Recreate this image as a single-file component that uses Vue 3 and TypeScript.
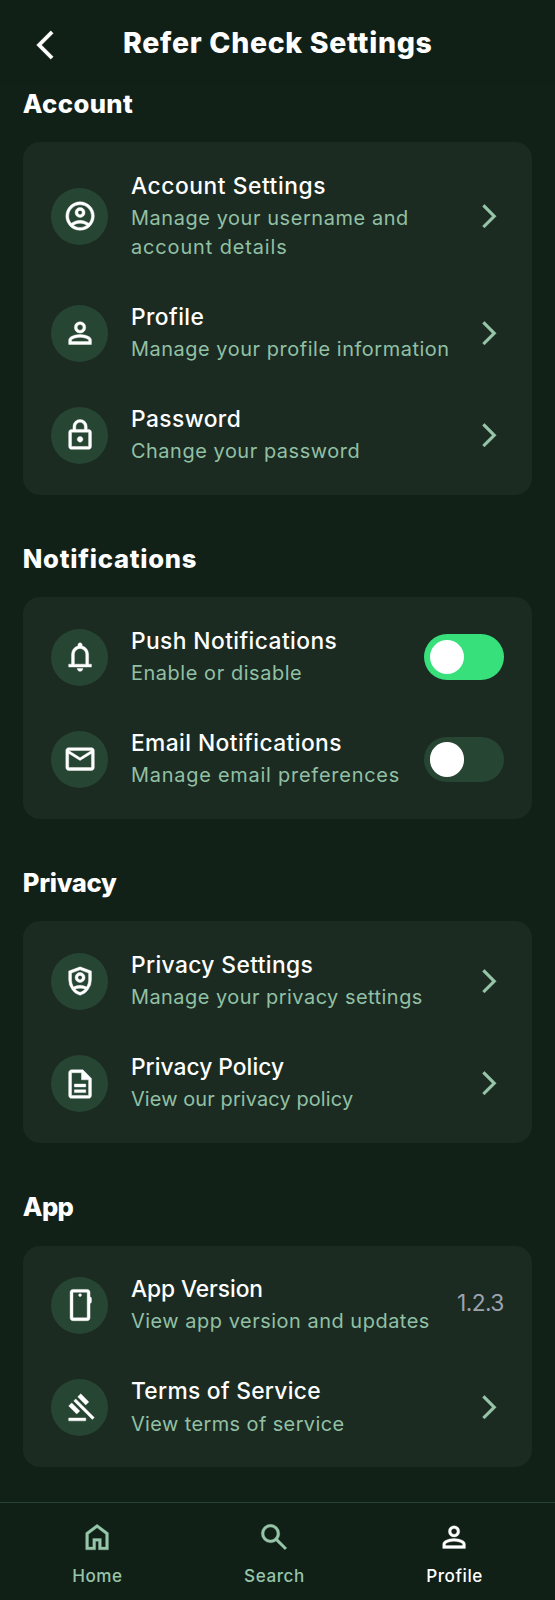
<script setup lang="ts">
import { reactive } from 'vue'

interface Line {
  text: string
  tracking: number
}

interface Item {
  id: string
  icon: string
  title: Line
  details: Line[]
  kind: 'link' | 'toggle' | 'value'
  value?: string
}

interface Section {
  heading: Line
  items: Item[]
}

const personPath =
  'M12 12q-1.65 0-2.825-1.175T8 8t1.175-2.825T12 4t2.825 1.175T16 8t-1.175 2.825T12 12m-8 8v-2.8q0-.85.438-1.562T5.6 14.55q1.55-.775 3.15-1.163T12 13t3.25.388t3.15 1.162q.725.375 1.163 1.088T20 17.2V20zm2-2h12v-.8q0-.275-.137-.5t-.363-.35q-1.35-.675-2.725-1.012T12 15t-2.775.338T6.5 16.35q-.225.125-.363.35T6 17.2zm6-8q.825 0 1.413-.587T14 8t-.587-1.412T12 6t-1.412.588T10 8t.588 1.413T12 10'

const icons: Record<string, string> = {
  back: 'M17.77 3.77L16 2L6 12l10 10l1.77-1.77L9.54 12z',
  forward: 'M6.23 20.23L8 22l10-10L8 2L6.23 3.77L14.46 12z',
  account:
    'M5.85 17.1q1.275-.975 2.85-1.537T12 15t3.3.563t2.85 1.537q.875-1.025 1.363-2.325T20 12q0-3.325-2.337-5.663T12 4T6.337 6.338T4 12q0 1.475.488 2.775T5.85 17.1M12 13q-1.475 0-2.488-1.012T8.5 9.5t1.013-2.488T12 6t2.488 1.013T15.5 9.5t-1.012 2.488T12 13m0 9q-2.075 0-3.9-.788t-3.175-2.137T2.788 15.9T2 12t.788-3.9t2.137-3.175T8.1 2.788T12 2t3.9.788t3.175 2.137T21.213 8.1T22 12t-.788 3.9t-2.137 3.175t-3.175 2.138T12 22m0-2q1.325 0 2.5-.387t2.15-1.113q-.975-.725-2.15-1.112T12 17t-2.5.388T7.35 18.5q.975.725 2.15 1.113T12 20m0-9q.65 0 1.075-.425T13.5 9.5t-.425-1.075T12 8t-1.075.425T10.5 9.5t.425 1.075T12 11',
  person: personPath,
  lock: 'M6 22q-.825 0-1.412-.587T4 20V10q0-.825.588-1.412T6 8h1V6q0-2.075 1.463-3.537T12 1t3.538 1.463T17 6v2h1q.825 0 1.413.588T20 10v10q0 .825-.587 1.413T18 22zm0-2h12V10H6zm6-3q.825 0 1.413-.587T14 15t-.587-1.412T12 13t-1.412.588T10 15t.588 1.413T12 17M9 8h6V6q0-1.25-.875-2.125T12 3t-2.125.875T9 6z',
  bell: 'M4 19v-2h2v-7q0-2.075 1.25-3.687T10.5 4.2v-.7q0-.625.438-1.062T12 2t1.063.438T13.5 3.5v.7q2 .5 3.25 2.113T18 10v7h2v2zm8 3q-.825 0-1.412-.587T10 20h4q0 .825-.587 1.413T12 22m-4-5h8v-7q0-1.65-1.175-2.825T12 6T9.175 7.175T8 10z',
  mail: 'M4 20q-.825 0-1.412-.587T2 18V6q0-.825.588-1.412T4 4h16q.825 0 1.413.588T22 6v12q0 .825-.587 1.413T20 20zm8-7L4 8v10h16V8zm0-2l8-5H4z',
  shield:
    'M12 22q-3.475-.875-5.738-3.988T4 11.1V5l8-3l8 3v6.1q0 3.8-2.262 6.913T12 22M7.45 16.15q1.05-.525 2.175-.837T12 15t2.375.313t2.175.837q.7-1.15 1.075-2.425T18 11.1V6.375L12 4.125L6 6.375V11.1q0 1.35.375 2.625T7.45 16.15M12 13q-1.45 0-2.475-1.025T8.5 9.5t1.025-2.475T12 6t2.475 1.025T15.5 9.5t-1.025 2.475T12 13m0-2q.625 0 1.063-.437T13.5 9.5t-.437-1.062T12 8t-1.062.438T10.5 9.5t.438 1.063T12 11m0 8.9q.975-.325 1.85-.85t1.6-1.275q-.75-.35-1.65-.562T12 17t-1.8.213t-1.65.562q.725.725 1.6 1.275T12 19.9',
  document:
    'M8 18h8v-2H8zm0-4h8v-2H8zm-2 8q-.825 0-1.412-.587T4 20V4q0-.825.588-1.412T6 2h8l6 6v12q0 .825-.587 1.413T18 22zm7-13V4H6v16h12V9z',
  phone:
    'M7 23q-.825 0-1.412-.587T5 21V3q0-.825.588-1.412T7 1h10q.825 0 1.413.588T19 3v3.1q.45.175.725.55T20 7.5v2q0 .475-.275.85T19 10.9V21q0 .825-.587 1.413T17 23zm0-2h10V3H7zm5-15q.425 0 .713-.288T13 5t-.288-.712T12 4t-.712.288T11 5t.288.713T12 6',
  gavel:
    'M4 21v-2h12v2zm5.65-4.85L4 10.5l2.1-2.15L11.8 14zM16 9.8l-5.65-5.7L12.5 2l5.65 5.65zM20.6 20L7.55 6.95l1.4-1.4L22 18.6z',
  home: 'M6 19h3v-6h6v6h3v-9l-6-4.5L6 10zm-2 2V9l8-6l8 6v12h-7v-6h-2v6z',
  search:
    'm19.6 21l-6.3-6.3q-.75.6-1.725.95T9.5 16q-2.725 0-4.612-1.888T3 9.5t1.888-4.612T9.5 3t4.613 1.888T16 9.5q0 1.1-.35 2.075T14.7 13.3l6.3 6.3zM9.5 14q1.875 0 3.188-1.312T14 9.5t-1.312-3.187T9.5 5T6.313 6.313T5 9.5t1.313 3.188T9.5 14',
}

const sections: Section[] = [
  {
    heading: { text: 'Account', tracking: 0.42 },
    items: [
      {
        id: 'account',
        icon: 'account',
        title: { text: 'Account Settings', tracking: 0.57 },
        details: [
          { text: 'Manage your username and', tracking: 0.6 },
          { text: 'account details', tracking: 0.9 },
        ],
        kind: 'link',
      },
      {
        id: 'profile',
        icon: 'person',
        title: { text: 'Profile', tracking: 0.45 },
        details: [{ text: 'Manage your profile information', tracking: 0.56 }],
        kind: 'link',
      },
      {
        id: 'password',
        icon: 'lock',
        title: { text: 'Password', tracking: 0.45 },
        details: [{ text: 'Change your password', tracking: 0.56 }],
        kind: 'link',
      },
    ],
  },
  {
    heading: { text: 'Notifications', tracking: 0.73 },
    items: [
      {
        id: 'push',
        icon: 'bell',
        title: { text: 'Push Notifications', tracking: 0.42 },
        details: [{ text: 'Enable or disable', tracking: 0.58 }],
        kind: 'toggle',
      },
      {
        id: 'email',
        icon: 'mail',
        title: { text: 'Email Notifications', tracking: 0.43 },
        details: [{ text: 'Manage email preferences', tracking: 0.78 }],
        kind: 'toggle',
      },
    ],
  },
  {
    heading: { text: 'Privacy', tracking: -0.3 },
    items: [
      {
        id: 'privacy',
        icon: 'shield',
        title: { text: 'Privacy Settings', tracking: 0.4 },
        details: [{ text: 'Manage your privacy settings', tracking: 0.5 }],
        kind: 'link',
      },
      {
        id: 'policy',
        icon: 'document',
        title: { text: 'Privacy Policy', tracking: 0.03 },
        details: [{ text: 'View our privacy policy', tracking: 0.13 }],
        kind: 'link',
      },
    ],
  },
  {
    heading: { text: 'App', tracking: -0.6 },
    items: [
      {
        id: 'version',
        icon: 'phone',
        title: { text: 'App Version', tracking: -0.08 },
        details: [{ text: 'View app version and updates', tracking: 0.54 }],
        kind: 'value',
        value: '1.2.3',
      },
      {
        id: 'terms',
        icon: 'gavel',
        title: { text: 'Terms of Service', tracking: 0.3 },
        details: [{ text: 'View terms of service', tracking: 0.42 }],
        kind: 'link',
      },
    ],
  },
]

const tabs = [
  { label: 'Home', icon: 'home', active: false },
  { label: 'Search', icon: 'search', active: false },
  { label: 'Profile', icon: 'person', active: true },
]

const enabled = reactive<Record<string, boolean>>({ push: true, email: false })

const spaced = (line: Line) => ({ letterSpacing: `${line.tracking}px` })
</script>

<template>
  <div class="screen">
    <header class="topbar">
      <button class="back" aria-label="Back">
        <svg class="icon" viewBox="0 0 24 24"><path :d="icons.back" /></svg>
      </button>
      <h1 class="page-title">Refer Check Settings</h1>
    </header>

    <main class="content">
      <section v-for="section in sections" :key="section.heading.text" class="section">
        <h2 class="heading" :style="spaced(section.heading)">{{ section.heading.text }}</h2>
        <div class="card">
          <div v-for="item in section.items" :key="item.id" class="row">
            <span class="badge">
              <svg class="icon" viewBox="0 0 24 24"><path :d="icons[item.icon]" /></svg>
            </span>
            <div class="text">
              <p class="title" :style="spaced(item.title)">{{ item.title.text }}</p>
              <p v-for="line in item.details" :key="line.text" class="detail" :style="spaced(line)">
                {{ line.text }}
              </p>
            </div>
            <svg v-if="item.kind === 'link'" class="chevron" viewBox="0 0 24 24">
              <path :d="icons.forward" />
            </svg>
            <button
              v-else-if="item.kind === 'toggle'"
              class="switch"
              :class="{ on: enabled[item.id] }"
              role="switch"
              :aria-checked="enabled[item.id]"
              :aria-label="item.title.text"
              @click="enabled[item.id] = !enabled[item.id]"
            >
              <span class="knob"></span>
            </button>
            <span v-else class="value">{{ item.value }}</span>
          </div>
        </div>
      </section>
    </main>

    <nav class="tabs">
      <a v-for="tab in tabs" :key="tab.label" class="tab" :class="{ active: tab.active }">
        <svg class="icon" viewBox="0 0 24 24"><path :d="icons[tab.icon]" /></svg>
        <span class="label">{{ tab.label }}</span>
      </a>
    </nav>
  </div>
</template>

<style>
body {
  margin: 0;
  background: #112117;
}
</style>

<style scoped>
.screen {
  display: flex;
  flex-direction: column;
  width: 555px;
  height: 1600px;
  overflow: hidden;
  box-sizing: border-box;
  background: #112117;
  color: #fff;
  font-family: Inter, 'Liberation Sans', sans-serif;
}

h1,
h2,
p {
  margin: 0;
}

button {
  padding: 0;
  border: 0;
  background: none;
  color: inherit;
  cursor: pointer;
}

svg {
  display: block;
  flex: none;
  fill: currentColor;
  stroke: currentColor;
  stroke-width: 0.2px;
}

.icon {
  width: 34.15px;
  height: 34.15px;
}

.badge .icon {
  stroke-width: 0.3px;
}

.topbar {
  display: flex;
  align-items: center;
  flex: none;
  height: 85px;
  padding: 0 28.5px 0 28px;
  box-sizing: border-box;
  background: #102017;
}

.back {
  padding-top: 6px;
}

.page-title {
  flex: 1;
  padding: 0.8px 33px 0 0;
  text-align: center;
  font-size: 28.46px;
  font-weight: 800;
  line-height: 36px;
  letter-spacing: 0.7px;
  white-space: nowrap;
}

.content {
  flex: 1;
  min-height: 0;
  padding: 3.4px 22.8px 0;
}

.section {
  margin-bottom: 48.1px;
}

.heading {
  margin-bottom: 22.1px;
  font-size: 25.6px;
  font-weight: 800;
  line-height: 32px;
}

.card {
  padding: 8.54px 0;
  border-radius: 17px;
  background: #1b2b22;
}

.row {
  display: flex;
  align-items: center;
  gap: 22.8px;
  padding: 19.92px 28.46px;
}

.badge {
  display: flex;
  flex: none;
  align-items: center;
  justify-content: center;
  width: 56.9px;
  height: 56.9px;
  border-radius: 50%;
  background: #264532;
}

.text {
  flex: 1;
  min-width: 0;
  white-space: nowrap;
  transform: translateY(-0.9px);
}

.title {
  padding: 0.8px 0 3.6px;
  font-size: 22.77px;
  font-weight: 500;
  line-height: 29.75px;
}

.detail {
  color: #92c0a5;
  font-size: 19.92px;
  line-height: 28.46px;
}

.chevron {
  width: 28.46px;
  height: 28.46px;
  color: #96c5a9;
}

.switch {
  display: flex;
  flex: none;
  align-items: center;
  width: 79.7px;
  height: 45.5px;
  padding: 0 5.7px;
  border-radius: 23px;
  background: #264532;
}

.switch.on {
  background: #38e07b;
}

.knob {
  width: 34.15px;
  height: 34.15px;
  border-radius: 50%;
  background: #fff;
}

.value {
  flex: none;
  padding-bottom: 4.4px;
  color: #9ca3af;
  font-size: 22.77px;
  line-height: 29.75px;
  letter-spacing: -0.6px;
}

.tabs {
  display: flex;
  flex: none;
  justify-content: space-around;
  height: 98px;
  padding: 17.3px 11.4px 0;
  box-sizing: border-box;
  border-top: 1.4px solid #264532;
  background: #102017;
}

.tab {
  display: flex;
  flex-direction: column;
  align-items: center;
  gap: 9.5px;
  color: #96c5a9;
}

.tab.active {
  color: #fff;
}

.label {
  font-size: 17.08px;
  font-weight: 500;
  line-height: 24px;
  letter-spacing: 0.55px;
}
</style>
